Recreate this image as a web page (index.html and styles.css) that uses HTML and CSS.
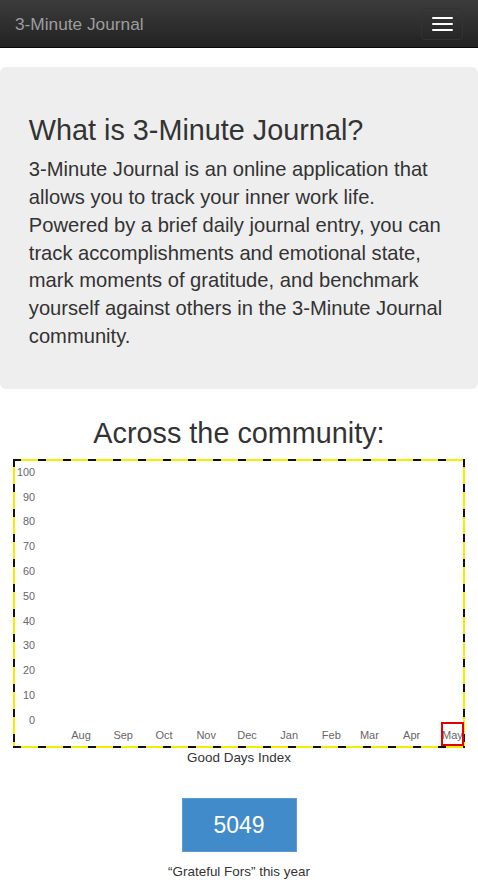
FILE: index.html
```html
<!DOCTYPE html>
<html lang="en">
<head>
<meta charset="utf-8">
<title>3-Minute Journal</title>
<link rel="stylesheet" href="styles.css">
</head>
<body>
<nav class="navbar">
  <a class="brand" href="#">3-Minute Journal</a>
  <button class="toggle" type="button" aria-label="Toggle navigation">
    <span class="bar"></span><span class="bar"></span><span class="bar"></span>
  </button>
</nav>

<section class="jumbotron">
  <h1>What is 3-Minute Journal?</h1>
  <p>3-Minute Journal is an online application that allows you to track your inner work life. Powered by a brief daily journal entry, you can track accomplishments and emotional state, mark moments of gratitude, and benchmark yourself against others in the 3-Minute Journal community.</p>
</section>

<section class="community">
  <h2>Across the community:</h2>
  <div class="chart">
    <div class="plot">
      <div class="yaxis">
        <span>100</span><span>90</span><span>80</span><span>70</span><span>60</span><span>50</span><span>40</span><span>30</span><span>20</span><span>10</span><span>0</span>
      </div>
      <div class="area"></div>
      <div></div>
      <div class="xaxis">
        <span>Aug</span><span>Sep</span><span>Oct</span><span>Nov</span><span>Dec</span><span>Jan</span><span>Feb</span><span>Mar</span><span>Apr</span><span>May</span>
      </div>
    </div>
    <div class="highlight"></div>
  </div>
  <div class="chart-title">Good Days Index</div>
  <div class="stat">5049</div>
  <div class="stat-caption">“Grateful Fors” this year</div>
</section>
</body>
</html>
```

FILE: styles.css
```css
* { box-sizing: border-box; }

html, body {
  margin: 0;
  padding: 0;
}

body {
  font-family: "Liberation Sans", Arial, sans-serif;
  color: #333;
  background: #fff;
}

.navbar {
  height: 48px;
  display: flex;
  align-items: center;
  justify-content: space-between;
  padding: 0 15px 0 15px;
  background: linear-gradient(to bottom, #3c3c3c 0%, #222 100%);
  border-bottom: 1px solid #080808;
}

.brand {
  color: #9d9d9d;
  font-size: 17.28px;
  text-decoration: none;
  line-height: 20px;
}

.toggle {
  width: 42px;
  height: 32px;
  margin: 0;
  padding: 0;
  background: transparent;
  border: 1px solid #333;
  border-radius: 4px;
  display: flex;
  flex-direction: column;
  align-items: center;
  justify-content: center;
  gap: 4px;
}

.bar {
  display: block;
  width: 21px;
  height: 2px;
  background: #fff;
  border-radius: 1px;
}

.jumbotron {
  margin: 19px 0 28.8px;
  padding: 28.8px;
  background: #eee;
  border-radius: 6px;
}

.jumbotron h1 {
  margin: 19.2px 0 9.6px;
  font-size: 28.8px;
  line-height: 31.7px;
  font-weight: 400;
  color: #333;
}

.jumbotron p {
  margin: 0 0 9.6px;
  font-size: 20.16px;
  line-height: 27.8px;
}

.community {
  text-align: center;
}

.community h2 {
  margin: 0 0 9.6px;
  font-size: 28.8px;
  line-height: 31.7px;
  font-weight: 400;
}

.chart {
  position: relative;
  margin: 0 13px;
  height: 289px;
  padding: 2px;
  background:
    repeating-linear-gradient(90deg, #111 0 8px, #f2ee00 8px 25px) top left / 100% 2px no-repeat,
    repeating-linear-gradient(90deg, #111 0 8px, #f2ee00 8px 25px) bottom left / 100% 2px no-repeat,
    repeating-linear-gradient(180deg, #111 0 8px, #f2ee00 8px 25px) top left / 2px 100% no-repeat,
    repeating-linear-gradient(180deg, #111 0 8px, #f2ee00 8px 25px) top right / 2px 100% no-repeat,
    #fff;
  text-align: left;
}

.plot {
  height: 100%;
  overflow: hidden;
  display: grid;
  grid-template-columns: 20px 1fr;
  grid-template-rows: auto auto;
  row-gap: 2px;
  padding: 4.5px 0;
  background: #fff;
}

.yaxis {
  display: flex;
  flex-direction: column;
  gap: 11.8px;
  text-align: right;
  font-size: 10.8px;
  line-height: 13px;
  color: #666;
}

/* month ticks spaced by the number of days in each month */
.xaxis {
  display: grid;
  grid-template-columns: 42.2px 40.8px 42.2px 40.8px 42.2px 42.2px 38.1px 42.2px 40.8px 30px;
  margin-left: 46px;
  font-size: 11px;
  line-height: 13px;
  color: #666;
  white-space: nowrap;
}

.xaxis span {
  justify-self: start;
  transform: translateX(-50%);
}

.highlight {
  position: absolute;
  left: 428px;
  top: 263px;
  width: 23px;
  height: 24px;
  border: 2px solid #e40000;
}

.chart-title {
  font-size: 13.44px;
  line-height: 19px;
  margin: 0;
}

.stat {
  display: inline-block;
  margin-top: 30.5px;
  width: 115px;
  height: 54px;
  background: #428bca;
  color: #fff;
  font-size: 23px;
  border: 1px solid #5e9ad2;
  line-height: 52px;
}

.stat-caption {
  margin-top: 10.5px;
  font-size: 13.44px;
  line-height: 19px;
}
```
